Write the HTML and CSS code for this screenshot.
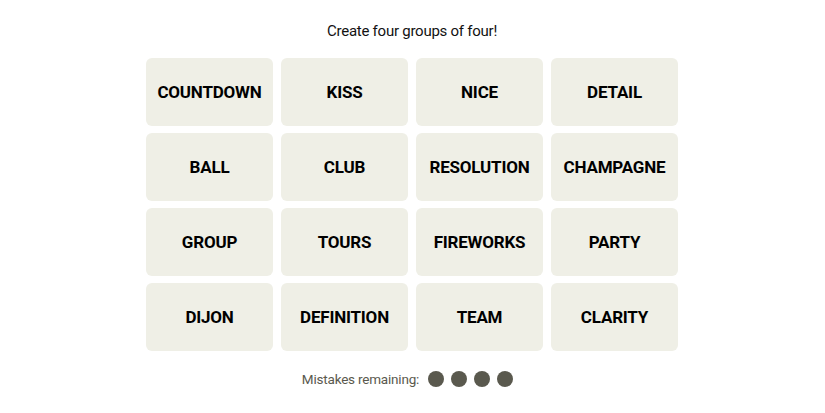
FILE: index.html
```html
<!DOCTYPE html>
<html>
<head>
<meta charset="utf-8">
<link rel="stylesheet" href="styles.css">
</head>
<body>
<main class="game">
  <p class="prompt">Create four groups of four!</p>
  <div class="board">
    <button class="tile">COUNTDOWN</button>
    <button class="tile">KISS</button>
    <button class="tile">NICE</button>
    <button class="tile">DETAIL</button>
    <button class="tile">BALL</button>
    <button class="tile">CLUB</button>
    <button class="tile">RESOLUTION</button>
    <button class="tile">CHAMPAGNE</button>
    <button class="tile">GROUP</button>
    <button class="tile">TOURS</button>
    <button class="tile">FIREWORKS</button>
    <button class="tile">PARTY</button>
    <button class="tile">DIJON</button>
    <button class="tile">DEFINITION</button>
    <button class="tile">TEAM</button>
    <button class="tile">CLARITY</button>
  </div>
  <div class="mistakes">
    <span class="mistakes-label">Mistakes remaining:</span>
    <span class="dots">
      <span class="dot"></span><span class="dot"></span><span class="dot"></span><span class="dot"></span>
    </span>
  </div>
</main>
</body>
</html>
```
FILE: styles.css
```css
* { box-sizing: border-box; }
html, body { margin: 0; padding: 0; background: #fff; }
body { font-family: "Roboto", "Liberation Sans", sans-serif; color: #000; }
.game {
  width: 824px;
  display: flex;
  flex-direction: column;
  align-items: center;
  padding-top: 21px;
}
.prompt {
  margin: 0;
  font-size: 15px;
  line-height: 20px;
  font-weight: 400;
  letter-spacing: -0.25px;
  color: #121212;
}
.board {
  margin-top: 17px;
  width: 532px;
  display: grid;
  grid-template-columns: repeat(4, 1fr);
  grid-auto-rows: 68px;
  column-gap: 8px;
  row-gap: 7px;
}
.tile {
  border: none;
  border-radius: 6px;
  background: #efefe6;
  font-family: "Roboto", "Liberation Sans", sans-serif;
  font-weight: 700;
  font-size: 17px;
  letter-spacing: -0.2px;
  color: #000;
  padding: 0;
  display: flex;
  align-items: center;
  justify-content: center;
}
.mistakes {
  margin-top: 19px;
  display: flex;
  align-items: center;
  gap: 9px;
  margin-right: 9px;
}
.mistakes-label {
  font-size: 13.5px;
  line-height: 18px;
  letter-spacing: -0.2px;
  color: #5a594e;
}
.dots { display: flex; gap: 7px; }
.dot {
  width: 16px;
  height: 16px;
  border-radius: 50%;
  background: #5a594e;
}
```
